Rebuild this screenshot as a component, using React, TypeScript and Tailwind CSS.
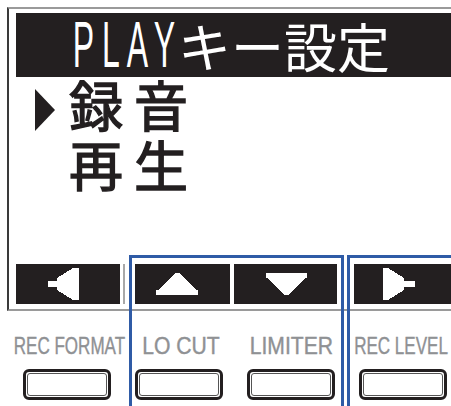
import React from 'react';

const INK = '#231f20';

const latinFont = "font-['Liberation_Sans',Arial,sans-serif]";
const cjkFont = "font-['Noto_Sans_CJK_JP','Noto_Sans_CJK_SC',sans-serif]";

// narrow pixel-style latin letter, half the width of a kanji cell
const NarrowLetter: React.FC<{ ch: string }> = ({ ch }) => (
  <span className="flex w-[27px] justify-center">
    <span className={`inline-block scale-x-[0.5] text-[64px] leading-none ${latinFont}`}>{ch}</span>
  </span>
);

interface KeyProps {
  width: string;
  children: React.ReactNode;
}

const SoftKey: React.FC<KeyProps> = ({ width, children }) => (
  <div className={`relative h-full ${width} bg-[#231f20]`}>{children}</div>
);

const ArrowSvg: React.FC<{ w: number; points: string }> = ({ w, points }) => (
  <svg width={w} height={40} viewBox={`0 0 ${w} 40`} className="block" shapeRendering="crispEdges">
    <polygon points={points} fill="#ffffff" />
  </svg>
);

const labels = [
  { text: 'REC FORMAT', scale: 'scale-x-[0.71]', shift: 'ml-[4px]' },
  { text: 'LO CUT', scale: 'scale-x-[0.88]', shift: 'ml-[4px]' },
  { text: 'LIMITER', scale: 'scale-x-[0.88]', shift: 'ml-[1px]' },
  { text: 'REC LEVEL', scale: 'scale-x-[0.71]', shift: 'ml-[-4px]' },
];

// menu text: regular weight thickened a little to match the LCD strokes
const menuText = `ml-[14px] mt-[-3px] text-[54px] font-normal leading-[60px] tracking-[11px] text-[#231f20] [-webkit-text-stroke:1.4px_#231f20] ${cjkFont}`;

export default function App() {
  return (
    <div className="relative h-[406px] w-[451px] overflow-hidden bg-white">
      {/* LCD frame */}
      <div className="ml-[7px] mt-[7px] flex h-[304px] flex-col border-b-2 border-l-2 border-t-2 border-b-[#9a9a9a] border-l-[#3a3a3a] border-t-[#9a9a9a] pb-[5px] pl-[7px] pt-[4px]">
        {/* title bar */}
        <div className="flex h-[64px] shrink-0 items-center bg-[#231f20] pl-[54px] text-white">
          <NarrowLetter ch="P" />
          <NarrowLetter ch="L" />
          <NarrowLetter ch="A" />
          <NarrowLetter ch="Y" />
          <span className={`text-[53px] leading-none ${cjkFont}`}>キー設定</span>
        </div>

        {/* menu items */}
        <div className="flex h-[60px] items-start pl-[19px]">
          <svg width="20" height="42" viewBox="0 0 20 42" className="mt-[12px] block shrink-0">
            <polygon points="0,0 20,21 0,42" fill={INK} />
          </svg>
          <span className={menuText}>録音</span>
        </div>
        <div className="flex h-[60px] items-start pl-[19px]">
          <div className="w-[20px] shrink-0" />
          <span className={menuText}>再生</span>
        </div>

        <div className="flex-1" />

        {/* soft key bar */}
        <div className="flex h-[40px] shrink-0">
          <SoftKey width="w-[104px]">
            <ArrowSvg w={104} points="32,17 41,17 41,14 57,4 63,4 63,36 57,36 41,26 41,23 32,23" />
          </SoftKey>
          <div className="ml-[3px] h-full w-[2px] bg-[#a8a8a8]" />
          <div className="ml-[10px]">
            <SoftKey width="w-[95px]">
              <ArrowSvg w={95} points="40,9 45,9 61,26 63,26 63,31 21,31 21,26 24,26" />
            </SoftKey>
          </div>
          <div className="ml-[4px]">
            <SoftKey width="w-[103px]">
              <ArrowSvg w={103} points="32,9 73,9 73,14 71,14 55,31 50,31 34,14 32,14" />
            </SoftKey>
          </div>
          <div className="ml-[17px] flex-1">
            <SoftKey width="w-full">
              <ArrowSvg w={97} points="29,4 34,4 50,14 50,17 61,17 61,23 50,23 50,26 34,36 29,36" />
            </SoftKey>
          </div>
        </div>
      </div>

      {/* function labels */}
      <div className="ml-[11px] mt-[23px] grid w-[448px] grid-cols-[112px_112px_112px_112px]">
        {labels.map((l) => (
          <div key={l.text} className="flex h-[24px] justify-center">
            <span className={`inline-block whitespace-nowrap text-[24px] leading-[24px] text-[#8f9194] [-webkit-text-stroke:0.4px_#8f9194] ${latinFont} ${l.scale} ${l.shift}`}>
              {l.text}
            </span>
          </div>
        ))}
      </div>

      {/* hardware buttons */}
      <div className="ml-[11px] mt-[11px] grid w-[448px] grid-cols-[112px_112px_112px_112px]">
        {labels.map((l) => (
          <div key={l.text} className="flex justify-center">
            <div className="h-[31px] w-[88px] rounded-[6px] border-[3px] border-[#231f20] bg-white p-[1px]">
              <div className="h-full w-full rounded-[3px] border border-[#555]" />
            </div>
          </div>
        ))}
      </div>

      {/* blue grouping frames */}
      <div className="absolute left-[129px] top-[255px] h-[170px] w-[215px] border-l-[3px] border-r-[3px] border-t-[3px] border-[#2f5ba6]" />
      <div className="absolute left-[347px] top-[255px] h-[170px] w-[120px] border-l-[3px] border-t-[3px] border-[#2f5ba6]" />
    </div>
  );
}
